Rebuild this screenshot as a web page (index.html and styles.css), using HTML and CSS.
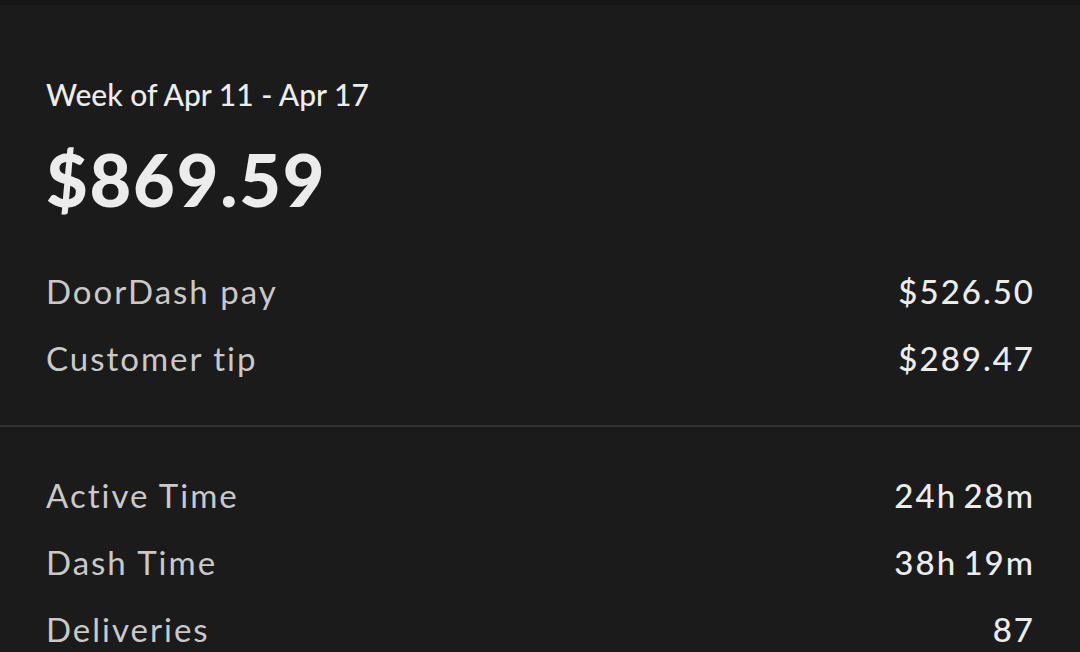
FILE: index.html
```html
<!DOCTYPE html>
<html lang="en">
<head>
    <meta charset="UTF-8">
    <meta name="viewport" content="width=device-width, initial-scale=1.0">
    <title>Weekly Earnings</title>
    <link rel="stylesheet" href="styles.css">
</head>
<body>

<div class="topbar"></div>

<div class="summary">
    <div class="week">Week of Apr 11 - Apr 17</div>
    <div class="total">$869.59</div>
    <div class="row">
        <span class="label">DoorDash pay</span>
        <span class="value">$526.50</span>
    </div>
    <div class="row">
        <span class="label">Customer tip</span>
        <span class="value">$289.47</span>
    </div>
</div>

<div class="divider"></div>

<div class="stats">
    <div class="row">
        <span class="label">Active Time</span>
        <span class="value">24h 28m</span>
    </div>
    <div class="row">
        <span class="label">Dash Time</span>
        <span class="value">38h 19m</span>
    </div>
    <div class="row">
        <span class="label">Deliveries</span>
        <span class="value">87</span>
    </div>
</div>

</body>
</html>
```

FILE: styles.css
```css
body {
    font-family: Lato, "Open Sans", sans-serif;
    background-color: #1b1b1b;
    color: #e8e8e8;
    margin: 0;
    padding: 0;
    overflow: hidden;
}
.topbar {
    height: 5px;
    background-color: #161616;
}
.summary {
    padding: 71px 47px 33px 46px;
}
.week {
    font-size: 30px;
    line-height: 36px;
    font-weight: 500;
    color: #ececec;
}
.total {
    margin-top: 24px;
    margin-bottom: 36px;
    font-size: 72px;
    line-height: 86px;
    font-weight: 900;
    letter-spacing: 1.8px;
    color: #ececec;
}
.row {
    display: flex;
    justify-content: space-between;
    font-size: 33px;
    line-height: 67px;
    letter-spacing: 2px;
}
.label {
    color: #c9c9c9;
}
.value {
    color: #ececec;
    font-weight: 500;
    word-spacing: -4px;
    margin-right: -2px;
}
.divider {
    height: 2px;
    background-color: #333333;
}
.stats {
    padding: 35px 47px 0 46px;
}
```
